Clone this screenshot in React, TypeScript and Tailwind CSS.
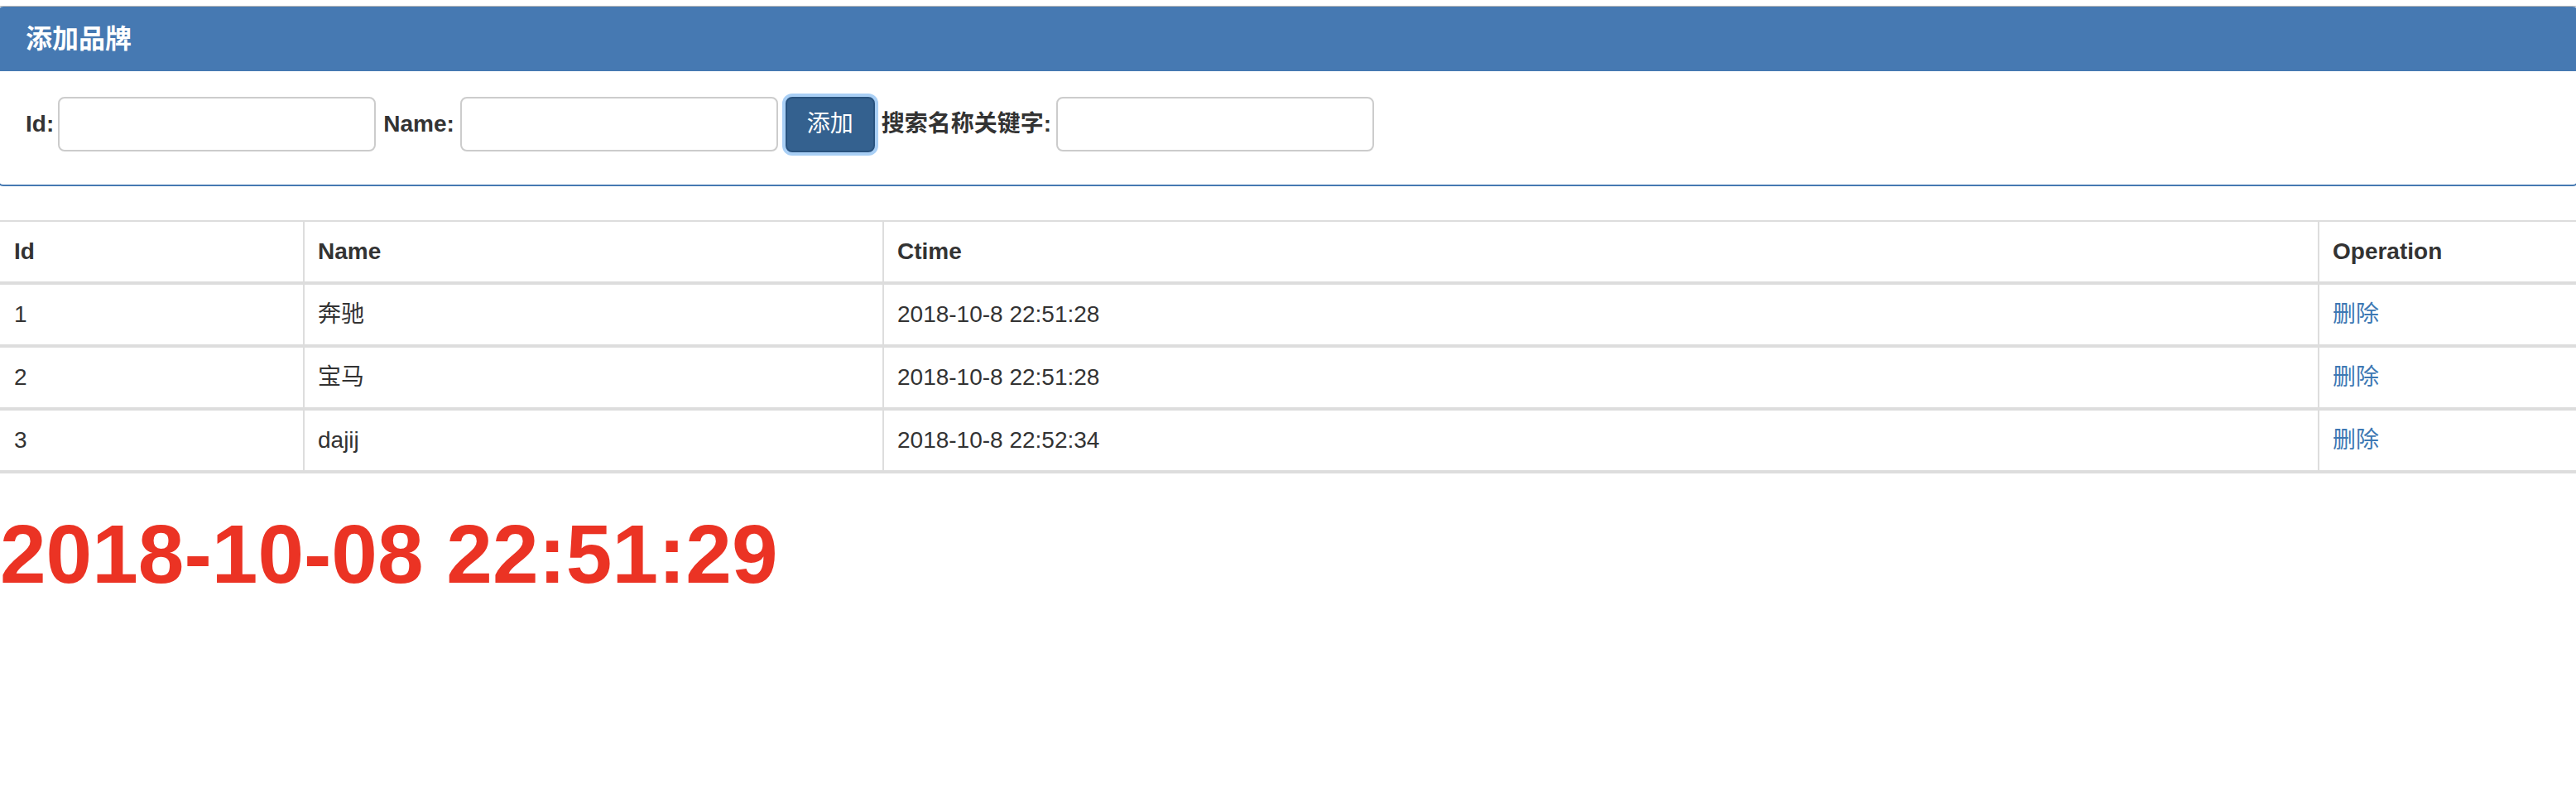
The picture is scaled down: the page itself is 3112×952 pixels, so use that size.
import type { ReactNode } from 'react'

interface Brand {
  id: number
  name: string
  ctime: string
}

const brands: Brand[] = [
  { id: 1, name: '奔驰', ctime: '2018-10-8 22:51:28' },
  { id: 2, name: '宝马', ctime: '2018-10-8 22:51:28' },
  { id: 3, name: 'dajij', ctime: '2018-10-8 22:52:34' },
]

function Label({ children, className }: { children: ReactNode; className?: string }) {
  return <label className={`font-bold text-[#333] ${className ?? ''}`}>{children}</label>
}

function TextInput({ className }: { className?: string }) {
  return (
    <input
      type="text"
      className={`h-[66px] w-[384px] rounded-[8px] border-2 border-[#cccccc] bg-white px-[24px] outline-none ${className ?? ''}`}
    />
  )
}

export default function App() {
  return (
    <div className="min-h-[952px] overflow-hidden bg-white pt-[7px] font-['Liberation_Sans','Noto_Sans_CJK_SC',sans-serif] text-[28px] leading-[40px] text-[#333]">
      <div className="border-t border-[#b8b8b8]">
        {/* panel */}
        <div className="-ml-[4px] w-[calc(100%+8px)] overflow-hidden rounded-[8px] border-2 border-t-0 border-[#4679b2]">
          <div className="flex h-[78px] items-center bg-[#4679b2] pl-[33px] text-[32px] font-bold text-white">
            添加品牌
          </div>
          <div className="h-[137px] pl-[33px] pt-[31px]">
            <div className="flex h-[66px] items-center">
              <Label>Id:</Label>
              <TextInput className="ml-[5px]" />
              <Label className="ml-[9px]">Name:</Label>
              <TextInput className="ml-[7px]" />
              <button
                type="button"
                className="ml-[9px] h-[67px] w-[108px] rounded-[8px] border-2 border-[#28527e] bg-[#34618f] text-[28px] text-white shadow-[0_0_0_4px_#a9cff5]"
              >
                添加
              </button>
              <Label className="ml-[8px]">搜索名称关键字:</Label>
              <TextInput className="ml-[6px]" />
            </div>
          </div>
        </div>
      </div>

      <table className="mt-[41px] w-full table-fixed border-separate border-spacing-0 text-left">
        <colgroup>
          <col className="w-[366px]" />
          <col className="w-[700px]" />
          <col className="w-[1734px]" />
          <col />
        </colgroup>
        <thead>
          <tr>
            <th className="border-y-[2px] border-b-4 border-[#dddddd] py-[16px] pl-[17px] font-bold">Id</th>
            <th className="border-l-2 border-y-[2px] border-b-4 border-[#dddddd] py-[16px] pl-[16px] font-bold">Name</th>
            <th className="border-l-2 border-y-[2px] border-b-4 border-[#dddddd] py-[16px] pl-[16px] font-bold">Ctime</th>
            <th className="border-l-2 border-y-[2px] border-b-4 border-[#dddddd] py-[16px] pl-[16px] font-bold">Operation</th>
          </tr>
        </thead>
        <tbody>
          {brands.map((b) => (
            <tr key={b.id}>
              <td className="border-b-4 border-[#dddddd] py-[16px] pl-[17px]">{b.id}</td>
              <td className="border-b-4 border-l-2 border-[#dddddd] py-[16px] pl-[16px]">{b.name}</td>
              <td className="border-b-4 border-l-2 border-[#dddddd] py-[16px] pl-[16px]">{b.ctime}</td>
              <td className="border-b-4 border-l-2 border-[#dddddd] py-[16px] pl-[16px]">
                <a href="#" className="text-[#3d78b3]">
                  删除
                </a>
              </td>
            </tr>
          ))}
        </tbody>
      </table>

      <h1 className="mt-[42px] text-[100px] font-bold leading-[110px] text-[#eb3324]">
        2018-10-08 22:51:29
      </h1>
    </div>
  )
}
